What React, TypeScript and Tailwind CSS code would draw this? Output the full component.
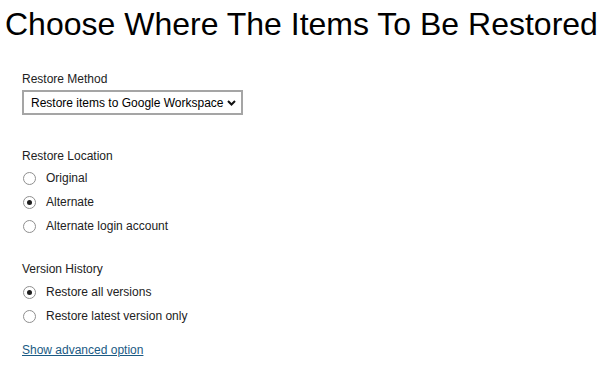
import { useState } from 'react';

const locations = ['Original', 'Alternate', 'Alternate login account'];
const versions = ['Restore all versions', 'Restore latest version only'];

function Radio({ label, checked, onSelect }: { label: string; checked: boolean; onSelect: () => void }) {
  return (
    <label className="flex items-center h-[24px] cursor-pointer" onClick={onSelect}>
      <span className="w-[13px] h-[13px] ml-[1px] rounded-full border border-[#8f8f8f] bg-white flex items-center justify-center">
        {checked && <span className="w-[5px] h-[5px] rounded-full bg-[#1f1f1f]" />}
      </span>
      <span className="ml-[10px] text-[12px] text-[#222]">{label}</span>
    </label>
  );
}

export default function App() {
  const [location, setLocation] = useState('Alternate');
  const [version, setVersion] = useState('Restore all versions');

  return (
    <div className="w-[600px] h-[370px] bg-white overflow-hidden" style={{ fontFamily: '"Liberation Sans", Arial, sans-serif' }}>
      <h1 className="text-[32px] leading-[38px] text-black pl-[5px] pt-[5px] whitespace-nowrap">
        Choose Where The Items To Be Restored
      </h1>

      <div className="pl-[22px] pt-[29px]">
        <div className="text-[12px] text-[#222] leading-[14px]">Restore Method</div>
        <div className="mt-[4px] relative w-[221px] h-[25px] border-2 border-[#a5a5a5] bg-white flex items-center">
          <span className="pl-[7px] text-[12px] text-black">Restore items to Google Workspace</span>
          <svg className="absolute right-[5px] top-[8px]" width="9" height="6" viewBox="0 0 9 6">
            <path d="M1 1l3.5 3.5L8 1" fill="none" stroke="#111" strokeWidth="2" />
          </svg>
        </div>

        <div className="mt-[34px] text-[12px] text-[#222] leading-[14px]">Restore Location</div>
        <div className="mt-[3px]">
          {locations.map((l) => (
            <Radio key={l} label={l} checked={location === l} onSelect={() => setLocation(l)} />
          ))}
        </div>

        <div className="mt-[24px] text-[12px] text-[#222] leading-[14px]">Version History</div>
        <div className="mt-[4px]">
          {versions.map((v) => (
            <Radio key={v} label={v} checked={version === v} onSelect={() => setVersion(v)} />
          ))}
        </div>

        <a href="#" className="block mt-[13px] text-[12px] text-[#1a5a84] underline">
          Show advanced option
        </a>
      </div>
    </div>
  );
}
